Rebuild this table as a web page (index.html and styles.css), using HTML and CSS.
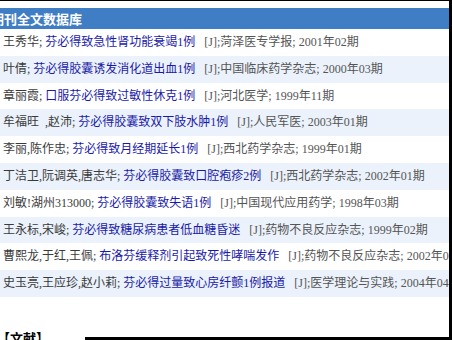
FILE: index.html
```html
<!DOCTYPE html>
<html lang="zh-CN">
<head>
<meta charset="utf-8">
<title>期刊全文数据库</title>
<link rel="stylesheet" href="styles.css">
</head>
<body>
<div class="frame">
  <div class="panel">
    <div class="head"><span class="head-text">期刊全文数据库</span></div>
    <ul class="list">
      <li class="row"><span class="au">王秀华;</span> <a class="ti">芬必得致急性肾功能衰竭1例</a>&nbsp;&nbsp; <span class="src">[J];菏泽医专学报; 2001年02期</span></li>
      <li class="row alt"><span class="au">叶倩;</span> <a class="ti">芬必得胶囊诱发消化道出血1例</a>&nbsp;&nbsp; <span class="src">[J];中国临床药学杂志; 2000年03期</span></li>
      <li class="row"><span class="au">章丽霞;</span> <a class="ti">口服芬必得致过敏性休克1例</a>&nbsp;&nbsp; <span class="src">[J];河北医学; 1999年11期</span></li>
      <li class="row alt"><span class="au">牟福旺&nbsp; ,赵沛;</span> <a class="ti">芬必得胶囊致双下肢水肿1例</a>&nbsp;&nbsp; <span class="src">[J];人民军医; 2003年01期</span></li>
      <li class="row"><span class="au">李丽,陈作忠;</span> <a class="ti">芬必得致月经期延长1例</a>&nbsp;&nbsp; <span class="src">[J];西北药学杂志; 1999年01期</span></li>
      <li class="row alt"><span class="au">丁洁卫,阮调英,唐志华;</span> <a class="ti">芬必得胶囊致口腔疱疹2例</a>&nbsp;&nbsp; <span class="src">[J];西北药学杂志; 2002年01期</span></li>
      <li class="row"><span class="au">刘敏!湖州313000;</span> <a class="ti">芬必得胶囊致失语1例</a>&nbsp;&nbsp; <span class="src">[J];中国现代应用药学; 1998年03期</span></li>
      <li class="row alt"><span class="au">王永标,宋峻;</span> <a class="ti">芬必得致糖尿病患者低血糖昏迷</a>&nbsp;&nbsp; <span class="src">[J];药物不良反应杂志; 1999年02期</span></li>
      <li class="row"><span class="au">曹熙龙,于红,王佩;</span> <a class="ti">布洛芬缓释剂引起致死性哮喘发作</a>&nbsp;&nbsp; <span class="src">[J];药物不良反应杂志; 2002年02期</span></li>
      <li class="row alt"><span class="au">史玉亮,王应珍,赵小莉;</span> <a class="ti">芬必得过量致心房纤颤1例报道</a>&nbsp;&nbsp; <span class="src">[J];医学理论与实践; 2004年04期</span></li>
    </ul>
    <div class="section">【文献】</div>
  </div>
  <div class="bottom-bar"></div>
</div>
</body>
</html>
```
FILE: styles.css
```css
html, body {
  margin: 0;
  padding: 0;
  background: #ffffff;
}
body {
  width: 452px;
  height: 340px;
  overflow: hidden;
  font-family: "Liberation Serif", "Noto Sans CJK SC", serif;
  font-size: 12px;
}
.frame {
  position: relative;
  box-sizing: border-box;
  width: 452px;
  height: 340px;
  border-top: 1px solid #000;
  border-right: 3px solid #000;
  overflow: hidden;
}
.panel {
  padding-top: 7px;
  width: 449px;
}
.head {
  height: 21px;
  line-height: 21px;
  background: #3f7dc4;
  overflow: hidden;
  white-space: nowrap;
}
.head-text {
  margin-left: -9px;
  color: #ffffff;
  font-weight: bold;
  font-size: 13px;
  font-family: "Noto Sans CJK SC", sans-serif;
}
.list {
  list-style: none;
  margin: 0;
  padding: 0;
}
.row {
  height: 26.8px;
  line-height: 26.8px;
  padding-left: 3px;
  white-space: nowrap;
  overflow: hidden;
  background: #ffffff;
}
.row.alt {
  background: #ebf2fb;
}
.au {
  color: #3a3a3a;
}
.ti {
  color: #1a1aa8;
  text-decoration: none;
}
.src {
  color: #555555;
}
.section {
  margin-top: 31px;
  margin-left: -3px;
  font-weight: bold;
  font-size: 13px;
  color: #000;
  font-family: "Noto Sans CJK SC", sans-serif;
  line-height: 20px;
}
.bottom-bar {
  position: absolute;
  left: 85px;
  right: 0;
  bottom: 0;
  height: 3px;
  background: #000;
}
```
